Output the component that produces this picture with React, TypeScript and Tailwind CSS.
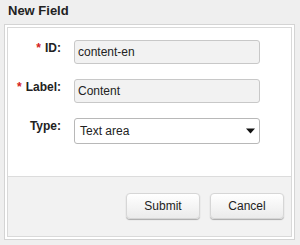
import React from "react";

const fieldRows = [
  { label: "ID", required: true, value: "content-en" },
  { label: "Label", required: true, value: "Content" },
];

function Row({ label, required, children, last }: { label: string; required?: boolean; children: React.ReactNode; last?: boolean }) {
  return (
    <div className={`flex items-start ${last ? "" : "mb-[15px]"}`}>
      <div className="w-[53px] shrink-0 text-right text-[12px] font-bold leading-[14px] pt-[1px]">
        {required && <span className="text-[#d42020] mr-[4px]">*</span>}
        {label}:
      </div>
      <div className="ml-[13px]">{children}</div>
    </div>
  );
}

export default function App() {
  return (
    <div className="w-[300px] h-[245px] bg-[#efefef] text-[#222] font-['Liberation_Sans',Arial,sans-serif]">
      <div className="h-[24px] pl-[8px] pt-[3px] text-[13px] font-bold leading-[16px]">New Field</div>

      <div className="ml-[4px] w-[291px] border border-[#d4d4d4] bg-white p-[2px]">
        <div className="border border-[#d9d9d9]">
          {/* form body */}
          <div className="bg-white h-[149px] pt-[12px] border-b border-[#dcdcdc]">
            {fieldRows.map((f) => (
              <Row key={f.label} label={f.label} required={f.required}>
                <div className="w-[186px] h-[24px] rounded-[3px] border border-[#c8c8c8] bg-[#f2f2f2] px-[3px] flex items-center text-[12px]">
                  {f.value}
                </div>
              </Row>
            ))}
            <Row label="Type" last>
              <div className="w-[186px] h-[26px] rounded-[3px] border border-[#b8b8b8] bg-white pl-[5px] pr-[4px] flex items-center justify-between text-[12px]">
                <span>Text area</span>
                <svg width="9" height="6" viewBox="0 0 9 6">
                  <path d="M0 0.5 H9 L4.5 5.5 Z" fill="#111" />
                </svg>
              </div>
            </Row>
          </div>

          {/* footer */}
          <div className="bg-[#f2f2f2] h-[59px] pt-[16px] pr-[7px] flex justify-end items-start gap-[10px]">
            <button className="w-[74px] h-[26px] rounded-[4px] border border-[#d6d6d6] bg-gradient-to-b from-white to-[#ebebeb] shadow-[0_1px_1px_rgba(0,0,0,0.3)] text-[12px] text-[#222]">
              Submit
            </button>
            <button className="w-[74px] h-[26px] rounded-[4px] border border-[#d6d6d6] bg-gradient-to-b from-white to-[#ebebeb] shadow-[0_1px_1px_rgba(0,0,0,0.3)] text-[12px] text-[#222]">
              Cancel
            </button>
          </div>
        </div>
      </div>
    </div>
  );
}
